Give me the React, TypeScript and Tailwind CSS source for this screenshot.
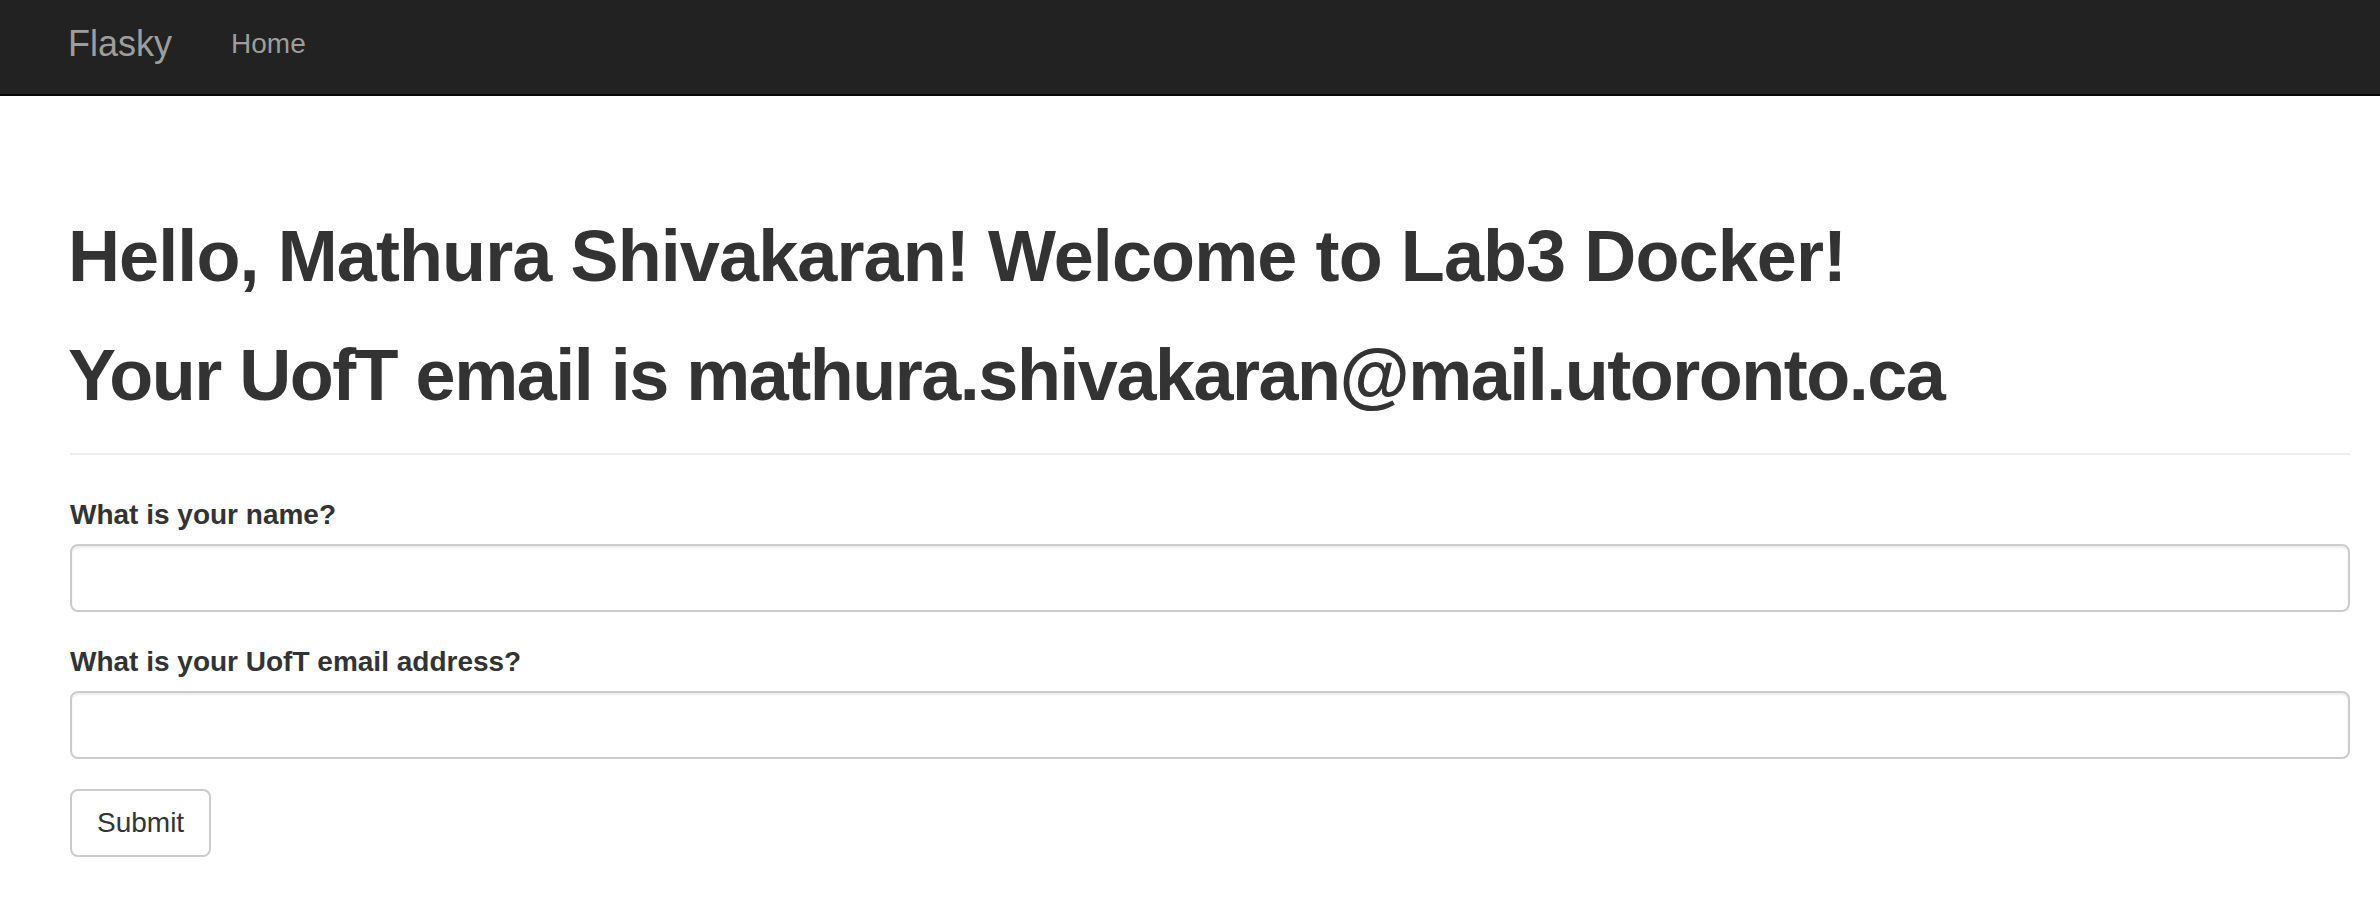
import React from 'react';

const Field: React.FC<{ label: string; id: string }> = ({ label, id }) => {
    return (
        <div className="mb-[30px]">
            <label htmlFor={id} className="block text-[28px] leading-[40px] font-bold text-[#333] mb-[9px]">
                {label}
            </label>
            <input
                id={id}
                type="text"
                className="block w-full h-[68px] px-[24px] text-[28px] border-2 border-[#ccc] rounded-[8px] bg-white shadow-[inset_0_2px_2px_rgba(0,0,0,0.075)] outline-none"
            />
        </div>
    );
}

const App: React.FC = () => {
    return (
        <div className="min-h-screen bg-white font-['Liberation_Sans',Arial,sans-serif] text-[#333]">
            <nav className="h-[96px] bg-[#222] border-b-2 border-[#080808] pl-[68px] flex items-start pt-[24px]">
                <a href="#" className="text-[36px] leading-[40px] text-[#9d9d9d]">
                    Flasky
                </a>
                <a href="#" className="ml-[59px] text-[28px] leading-[40px] text-[#9d9d9d]">
                    Home
                </a>
            </nav>
            <main className="pl-[70px] pr-[30px] pt-[121px]">
                <div className="pb-[38px] border-b-2 border-[#eee]">
                    <h1 className="-ml-[2px] text-[72px] leading-[79px] font-bold tracking-[-0.9px]">
                        Hello, Mathura Shivakaran! Welcome to Lab3 Docker!
                    </h1>
                    <h1 className="-ml-[2px] mt-[40px] text-[72px] leading-[79px] font-bold tracking-[-1.5px]">
                        Your UofT email is mathura.shivakaran@mail.utoronto.ca
                    </h1>
                </div>
                <form className="mt-[40px]" onSubmit={(e) => e.preventDefault()}>
                    <Field label="What is your name?" id="name" />
                    <Field label="What is your UofT email address?" id="email" />
                    <button
                        type="submit"
                        className="h-[68px] px-[25px] text-[28px] leading-[40px] text-[#333] bg-white border-2 border-[#ccc] rounded-[8px]"
                    >
                        Submit
                    </button>
                </form>
            </main>
        </div>
    );
}

export default App;
